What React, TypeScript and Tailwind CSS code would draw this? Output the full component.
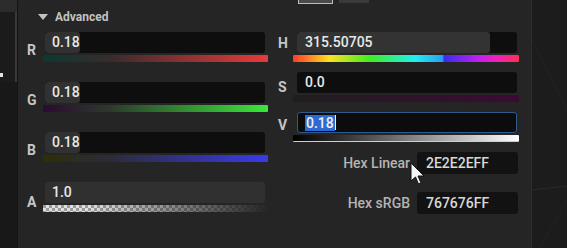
import React from "react";

const checker =
  "bg-[repeating-conic-gradient(#e0e0e0_0%_25%,#9a9a9a_0%_50%)] bg-[length:6px_6px]";

type RowProps = {
  label: string;
  value: string;
  fill: number;
  bar: string;
  labelPad: string;
};

const LeftRow = ({ label, value, fill, bar, labelPad }: RowProps) => (
  <div className="flex h-[50px]">
    <div className={`w-[25px] pl-[9px] ${labelPad} text-[14px] leading-[15px] font-bold text-[#c6c6c6]`}>
      {label}
    </div>
    <div className="w-[225px]">
      <div className="relative ml-[2px] h-[21px] w-[220px] overflow-hidden rounded-[3px] bg-[#0e0e0e]">
        <div
          className="absolute inset-y-0 left-0 rounded-[3px] bg-[#313131]"
          style={{ width: `${fill * 100}%` }}
        />
        <div className="relative pl-[7px] text-[14px] leading-[21px] font-medium text-[#e8e8e8]">
          {value}
        </div>
      </div>
      <div className={`mt-[2px] h-[7px] rounded-[1px] ${bar}`} />
    </div>
  </div>
);

const RightRow = ({ label, value, fill, bar, labelPad }: RowProps) => (
  <div className="flex h-[40px]">
    <div className={`w-[25px] pl-[10px] ${labelPad} text-[14px] leading-[15px] font-bold text-[#c6c6c6]`}>
      {label}
    </div>
    <div className="w-[226px]">
      <div className="relative ml-[4px] h-[21px] w-[220px] overflow-hidden rounded-[3px] bg-[#0e0e0e]">
        <div
          className="absolute inset-y-0 left-0 rounded-[3px] bg-[#333333]"
          style={{ width: `${fill * 100}%` }}
        />
        <div className="relative pl-[8px] text-[14px] leading-[21px] font-medium text-[#e8e8e8]">
          {value}
        </div>
      </div>
      <div className={`mt-[2px] h-[7px] rounded-[1px] ${bar}`} />
    </div>
  </div>
);

const HexRow = ({ label, value }: { label: string; value: string }) => (
  <div className="flex h-[40px] justify-end pr-[1px]">
    <div className="flex h-[22px] items-center gap-[7px]">
      <span className="text-[14px] font-medium text-[#b4b4b4]">{label}</span>
      <div className="h-[22px] w-[101px] rounded-[3px] bg-[#121212] pl-[9px] text-[14px] leading-[22px] font-medium text-[#d8d8d8]">
        {value}
      </div>
    </div>
  </div>
);

export default function App() {
  return (
    <div className="flex h-[248px] w-[567px] overflow-hidden bg-[#1d1d1d] font-['Roboto',sans-serif]">
      {/* left strip */}
      <div className="flex w-[17px] flex-col">
        <div className="h-[12px] bg-[#2c2c2c]" />
        <div className="relative h-[70px] border-r-2 border-[#393939] bg-[#1b1b1b]">
          <div className="absolute left-0 top-[61px] h-[4px] w-[3px] bg-[#e0e0e0]" />
        </div>
        <div className="flex-1 bg-[#181818]" />
      </div>
      <div className="w-px bg-[#141414]" />

      {/* main panel */}
      <div className="relative w-[513px] bg-[#252525]">
        <div className="flex h-[4px]">
          <div className="w-[280px]" />
          <div className="h-[4px] w-[35px] border-x border-b border-[#bdbdbd] bg-[#4a4a4a]" />
          <div className="ml-[6px] h-[3px] w-[30px] bg-[#3a3a3a]" />
        </div>
        <div className="mt-[6px] flex h-[14px] items-center pl-[20px]">
          <svg width="10" height="7" viewBox="0 0 10 7" className="mr-[7px]">
            <path d="M0 0 L10 0 L5 6 Z" fill="#c2c2c2" />
          </svg>
          <span className="text-[12px] font-bold text-[#c2c2c2]">Advanced</span>
        </div>

        <div className="mt-[8px] flex">
          <div className="w-[250px]">
            <LeftRow
              label="R"
              value="0.18"
              fill={0.16}
              labelPad="pt-[11px]"
              bar="bg-[linear-gradient(to_right,#0a3934,#3a2b2b_30%,#e83a3a)]"
            />
            <LeftRow
              label="G"
              value="0.18"
              fill={0.16}
              labelPad="pt-[11px]"
              bar="bg-[linear-gradient(to_right,#2c0a32,#2c3a2c_30%,#3ae83a)]"
            />
            <LeftRow
              label="B"
              value="0.18"
              fill={0.16}
              labelPad="pt-[11px]"
              bar="bg-[linear-gradient(to_right,#2e2e06,#2b2b3a_30%,#3a3aea)]"
            />
            <div className="flex h-[50px]">
              <div className="w-[25px] pl-[9px] pt-[13px] text-[14px] leading-[15px] font-bold text-[#c6c6c6]">
                A
              </div>
              <div className="w-[225px]">
                <div className="ml-[2px] h-[21px] w-[220px] rounded-[3px] bg-[#303030] pl-[7px] text-[14px] leading-[21px] font-medium text-[#e8e8e8]">
                  1.0
                </div>
                <div className={`relative mt-[2px] h-[7px] ${checker}`}>
                  <div className="absolute inset-0 bg-[linear-gradient(to_right,transparent_20%,#252525)]" />
                </div>
              </div>
            </div>
          </div>

          <div className="w-[251px]">
            <RightRow
              label="H"
              value="315.50705"
              fill={0.876}
              labelPad="pt-[4px]"
              bar="bg-[linear-gradient(to_right,#ff3a2a,#ffdf20_16%,#40ee20_34%,#20eef0_54%,#2aa0f0_66%,#3a2cf0_67%,#c020f0_82%,#f020c0_90%,#ff3050)]"
            />
            <RightRow
              label="S"
              value="0.0"
              fill={0}
              labelPad="pt-[8px]"
              bar="bg-[linear-gradient(to_right,#1e1e1e,#3c0a34)]"
            />
            <div className="flex h-[40px]">
              <div className="w-[25px] pl-[10px] pt-[6px] text-[14px] leading-[15px] font-bold text-[#c6c6c6]">
                V
              </div>
              <div className="w-[226px]">
                <div className="ml-[4px] flex h-[21px] w-[220px] items-center rounded-[3px] border border-[#2f5a8c] bg-[#0c0c0c] pl-[7px]">
                  <span className="bg-[#2e6ad2] px-[1px] text-[14px] leading-[16px] font-medium text-[#f0f0f0]">
                    0.18
                  </span>
                  <span className="h-[15px] w-px bg-[#f0f0f0]" />
                </div>
                <div className="mt-[2px] h-[7px] rounded-[1px] border-b border-[#cfcfcf] bg-[linear-gradient(to_right,#000,#3a3a3a_25%,#fff)]" />
              </div>
            </div>
            <HexRow label="Hex Linear" value="2E2E2EFF" />
            <HexRow label="Hex sRGB" value="767676FF" />
          </div>
        </div>

        {/* mouse cursor */}
        <svg
          width="15"
          height="24"
          viewBox="0 0 15 24"
          className="absolute left-[392px] top-[162px]"
        >
          <path
            d="M1 1 L1 19 L5.5 15 L8.5 22 L11 21 L8 14 L14 14 Z"
            fill="#f4f4f4"
            stroke="#111"
            strokeWidth="1"
            strokeLinejoin="round"
          />
        </svg>
      </div>
      <div className="w-px bg-[#2e2e2e]" />

      {/* right area */}
      <div className="flex-1 bg-[#1c1c1c]">
        <svg width="35" height="248" viewBox="0 0 35 248">
          <path d="M0 190 L35 186" stroke="#2a2a2a" strokeWidth="1" />
          <path d="M0 40 L35 110" stroke="#222" strokeWidth="1" />
          <path d="M8 248 L35 200" stroke="#232323" strokeWidth="1" />
        </svg>
      </div>
    </div>
  );
}
